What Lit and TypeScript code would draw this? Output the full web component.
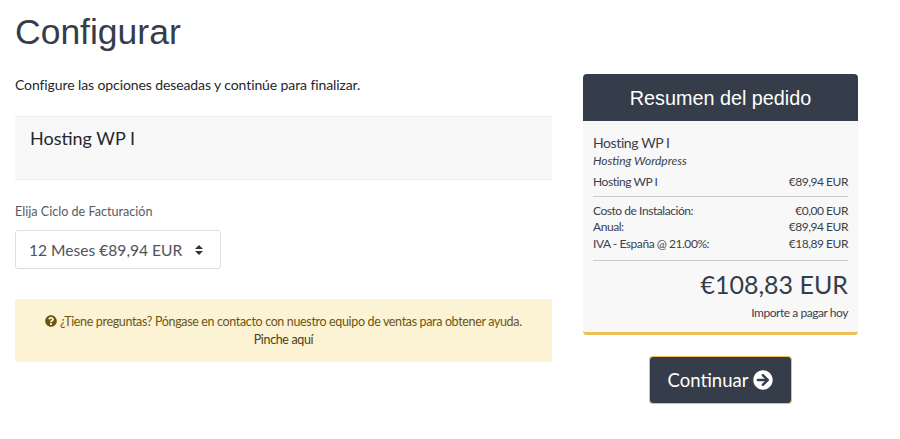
import { LitElement, css, html } from "lit";
import { customElement } from "lit/decorators.js";

const QUESTION = "M504 256c0 136.997-111.043 248-248 248S8 392.997 8 256C8 119.083 119.043 8 256 8s248 111.083 248 248zM262.655 90c-54.497 0-89.255 22.957-116.549 63.758-3.536 5.286-2.353 12.415 2.715 16.258l34.699 26.31c5.205 3.947 12.621 3.008 16.665-2.122 17.864-22.658 30.113-35.797 57.303-35.797 20.429 0 45.698 13.148 45.698 32.958 0 14.976-12.363 22.667-32.534 33.976C247.128 238.528 216 254.941 216 296v4c0 6.627 5.373 12 12 12h56c6.627 0 12-5.373 12-12v-1.333c0-28.462 83.186-29.647 83.186-106.667 0-58.002-60.165-102-116.531-102zM256 338c-25.365 0-46 20.635-46 46 0 25.364 20.635 46 46 46s46-20.636 46-46c0-25.365-20.635-46-46-46z";
const ARROW = "M256 8c137 0 248 111 248 248S393 504 256 504 8 393 8 256 119 8 256 8zm-28.9 143.6l75.5 72.4H120c-13.3 0-24 10.7-24 24v16c0 13.3 10.7 24 24 24h182.6l-75.5 72.4c-9.7 9.3-9.9 24.8-.4 34.3l11 10.9c9.4 9.4 24.6 9.4 33.9 0L404.3 273c9.4-9.4 9.4-24.6 0-33.9L271.6 106.3c-9.4-9.4-24.6-9.4-33.9 0l-11 10.9c-9.3 9.6-9.1 25.1.4 34.4z";

@customElement("app-root")
export class AppRoot extends LitElement {
  static styles = css`
    :host {
      display: block;
      height: 439px;
      overflow: hidden;
      background: #fff;
      color: #272b33;
      font-family: "Lato", "Liberation Sans", sans-serif;
      font-size: 14px;
    }
    .page {
      padding: 0 15px;
      display: grid;
      grid-template-columns: 537px 275px;
      column-gap: 31px;
    }
    h1 {
      margin: 0;
      padding-top: 11px;
      height: 40px;
      font: 400 35.5px/43px "Liberation Sans", sans-serif;
      color: #353d4a;
    }
    .intro {
      margin: 24px 0 0;
      line-height: 20px;
      letter-spacing: -0.1px;
      color: #23272e;
    }
    .product {
      box-sizing: border-box;
      margin-top: 21px;
      height: 64px;
      padding: 8px 15px 0;
      background: #f8f8f8;
      border-top: 1px solid #efefef;
      border-bottom: 1px solid #efefef;
      font-size: 18px;
      line-height: 26px;
      color: #23272e;
    }
    .cycle-label {
      margin-top: 22px;
      line-height: 20px;
      font-size: 12.6px;
      color: #555b64;
    }
    .select {
      margin-top: 8px;
      box-sizing: border-box;
      width: 206px;
      height: 39px;
      padding: 0 17px 0 13px;
      display: flex;
      align-items: center;
      justify-content: space-between;
      border: 1px solid #dedede;
      border-radius: 3px;
      background: #fff;
      font-size: 15.6px;
      color: #4f535a;
    }
    .carets {
      display: flex;
      flex-direction: column;
      gap: 2px;
    }
    .carets i {
      display: block;
      width: 0;
      height: 0;
      border-left: 4px solid transparent;
      border-right: 4px solid transparent;
    }
    .carets i:first-child {
      border-bottom: 4px solid #333;
    }
    .carets i:last-child {
      border-top: 4px solid #333;
    }
    .notice {
      margin-top: 30px;
      box-sizing: border-box;
      height: 63px;
      padding-top: 14px;
      background: #fcf3d5;
      border-radius: 3px;
      text-align: center;
      line-height: 18px;
      font-size: 12.5px;
      letter-spacing: -0.35px;
      color: #6d5611;
    }
    .notice svg {
      width: 12px;
      height: 12px;
      vertical-align: -1px;
      fill: #6d5611;
    }
    .notice a {
      color: #4f3f0e;
    }
    .side {
      padding-top: 74px;
    }
    .summary {
      border-radius: 4px;
      background: #f8f8f9;
      border-bottom: 3px solid #edbf55;
      overflow: hidden;
    }
    .summary h2 {
      margin: 0;
      height: 47px;
      background: #353d4a;
      color: #fff;
      text-align: center;
      font: 400 19.8px/49px "Liberation Sans", sans-serif;
    }
    .body {
      padding: 11px 10px 10px;
      font-size: 12px;
      line-height: 16.5px;
      letter-spacing: -0.45px;
      color: #3b414a;
    }
    .name {
      font-size: 14px;
      line-height: 21px;
      letter-spacing: -0.4px;
    }
    .group {
      font-size: 12px;
      letter-spacing: 0;
      font-style: italic;
      line-height: 15px;
    }
    .row {
      display: flex;
      justify-content: space-between;
    }
    .first {
      margin-top: 6px;
      padding-bottom: 5px;
      border-bottom: 1px solid #ccc;
      margin-bottom: 6px;
    }
    .costs {
      padding-bottom: 8px;
      border-bottom: 1px solid #ccc;
    }
    .total {
      margin-top: 5px;
      text-align: right;
      font-size: 25px;
      line-height: 36px;
      letter-spacing: 0;
      color: #353d4a;
    }
    .today {
      margin-top: 3px;
      text-align: right;
    }
    .actions {
      display: flex;
      justify-content: center;
      margin-top: 21px;
    }
    .continue {
      box-sizing: border-box;
      width: 143px;
      height: 48px;
      display: flex;
      align-items: center;
      justify-content: center;
      gap: 5px;
      border: 1px solid #edbf55;
      border-radius: 4px;
      background: #353d4a;
      color: #fff;
      font: inherit;
      font-size: 18.5px;
    }
    .continue svg {
      width: 20px;
      height: 20px;
      fill: #fff;
    }
  `;

  render() {
    return html`
      <div class="page">
        <main>
          <h1>Configurar</h1>
          <p class="intro">Configure las opciones deseadas y continúe para finalizar.</p>
          <div class="product">Hosting WP I</div>
          <div class="cycle-label">Elija Ciclo de Facturación</div>
          <div class="select">
            <span>12 Meses €89,94 EUR</span>
            <span class="carets"><i></i><i></i></span>
          </div>
          <div class="notice">
            <svg viewBox="0 0 512 512"><path d=${QUESTION}></path></svg>
            ¿Tiene preguntas? Póngase en contacto con nuestro equipo de ventas para obtener ayuda.<br />
            <a>Pinche aquí</a>
          </div>
        </main>
        <aside class="side">
          <section class="summary">
            <h2>Resumen del pedido</h2>
            <div class="body">
              <div class="name">Hosting WP I</div>
              <div class="group">Hosting Wordpress</div>
              <div class="row first"><span>Hosting WP I</span><span>€89,94 EUR</span></div>
              <div class="costs">
                <div class="row"><span>Costo de Instalación:</span><span>€0,00 EUR</span></div>
                <div class="row"><span>Anual:</span><span>€89,94 EUR</span></div>
                <div class="row"><span>IVA - España @ 21.00%:</span><span>€18,89 EUR</span></div>
              </div>
              <div class="total">€108,83 EUR</div>
              <div class="today">Importe a pagar hoy</div>
            </div>
          </section>
          <div class="actions">
            <button class="continue">
              Continuar
              <svg viewBox="0 0 512 512"><path d=${ARROW}></path></svg>
            </button>
          </div>
        </aside>
      </div>
    `;
  }
}
